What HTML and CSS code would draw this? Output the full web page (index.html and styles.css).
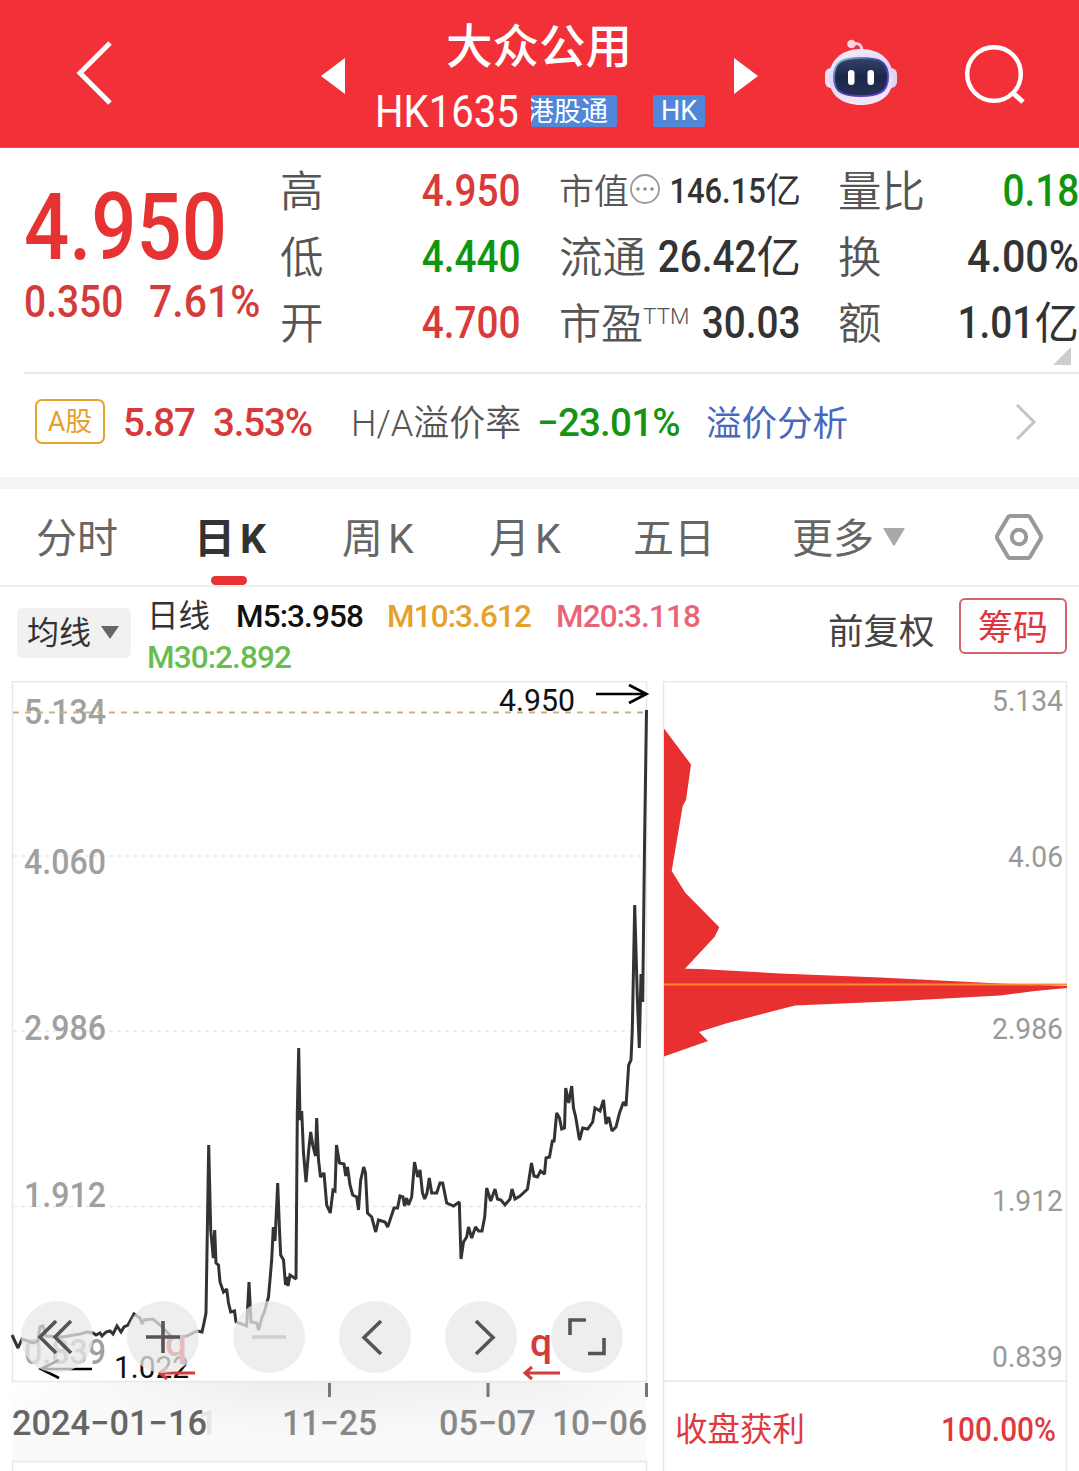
FILE: index.html
```html
<!DOCTYPE html>
<html lang="zh-CN">
<head>
<meta charset="utf-8">
<title>大众公用 HK1635</title>
<link rel="stylesheet" href="styles.css">
</head>
<body>
<header class="topbar">
  <svg class="back" width="44" height="70" viewBox="0 0 44 70"><path d="M38 5 8 35l30 30" fill="none" stroke="#fff" stroke-width="5"/></svg>
  <svg class="prev" width="24" height="36" viewBox="0 0 24 36"><path d="M0 18 24 0v36z" fill="#fff"/></svg>
  <div class="stock">
    <h1>大众公用</h1>
    <div class="code-row"><span class="code">HK1635</span><span class="tag tag-connect"><i>港股通</i></span><span class="tag tag-hk">HK</span></div>
  </div>
  <svg class="next" width="24" height="36" viewBox="0 0 24 36"><path d="M24 18 0 0v36z" fill="#fff"/></svg>
  <svg class="robot" width="74" height="68" viewBox="0 0 74 68">
    <defs>
      <linearGradient id="shell" x1="0" y1="0" x2=".3" y2="1"><stop offset="0" stop-color="#fbeef6"/><stop offset=".55" stop-color="#dcd6f6"/><stop offset="1" stop-color="#f4e6fa"/></linearGradient>
      <linearGradient id="rim" x1="0" y1="0" x2="1" y2="1"><stop offset="0" stop-color="#79c8dc"/><stop offset=".45" stop-color="#4a3fa0"/><stop offset="1" stop-color="#6a3fe0"/></linearGradient>
      <linearGradient id="visor" x1="0" y1="0" x2="0" y2="1"><stop offset="0" stop-color="#364266"/><stop offset=".5" stop-color="#1b2749"/><stop offset="1" stop-color="#253156"/></linearGradient>
    </defs>
    <path d="M28 5c7-2 10 1 10 8" fill="none" stroke="#fad0dc" stroke-width="3"/><circle cx="27.500" cy="5" r="4.300" fill="#fbd3de"/>
    <rect x="1" y="29" width="14" height="20" rx="6" fill="#f1e3f4"/><rect x="59" y="29" width="14" height="20" rx="6" fill="#e2d4f2"/>
    <path d="M37 10c20 0 32 12 32 29 0 18-14 27-32 27S5 57 5 39c0-17 12-29 32-29z" fill="url(#shell)"/>
    <path d="M37 19c18 0 27 3 27 19s-10 19-27 19-27-3-27-19 9-19 27-19z" fill="url(#visor)" stroke="url(#rim)" stroke-width="2"/>
    <rect x="24" y="31" width="6.500" height="15" rx="3.200" fill="#fff"/><rect x="43.500" y="31" width="6.500" height="15" rx="3.200" fill="#fff"/>
  </svg>
  <svg class="search" width="64" height="64" viewBox="0 0 64 64"><circle cx="31" cy="31" r="26.800" fill="none" stroke="#fff" stroke-width="4.400"/><path d="m50 50 10 9" stroke="#fff" stroke-width="5"/></svg>
</header>

<section class="quote">
  <div class="price-block">
    <div class="price">4.950</div>
    <div class="change"><span>0.350</span><span class="pct">7.61%</span></div>
  </div>
  <dl class="stats">
    <div><dt>高</dt><dd class="up"><span>4.950</span></dd></div>
    <div><dt>低</dt><dd class="down"><span>4.440</span></dd></div>
    <div><dt>开</dt><dd class="up"><span>4.700</span></dd></div>
  </dl>
  <dl class="stats">
    <div class="compact"><dt>市值<svg width="32" height="32" viewBox="0 0 32 32"><circle cx="16" cy="16" r="14" fill="none" stroke="#999" stroke-width="1.800"/><g fill="#888"><circle cx="9" cy="16" r="1.700"/><circle cx="16" cy="16" r="1.700"/><circle cx="23" cy="16" r="1.700"/></g></svg></dt><dd><span>146.15</span><b>亿</b></dd></div>
    <div><dt>流通</dt><dd><span>26.42</span><b>亿</b></dd></div>
    <div class="pe"><dt>市盈<sup>TTM</sup></dt><dd><span>30.03</span></dd></div>
  </dl>
  <dl class="stats">
    <div><dt>量比</dt><dd class="down"><span>0.18</span></dd></div>
    <div><dt>换</dt><dd><span class="pct">4.00%</span></dd></div>
    <div><dt>额</dt><dd><span>1.01</span><b>亿</b></dd></div>
  </dl>
  <svg class="expand" width="18" height="18" viewBox="0 0 18 18"><path d="M18 0v18H0z" fill="#ccc"/></svg>
</section>

<section class="premium">
  <span class="a-badge">A股</span>
  <span class="a-price">5.87</span>
  <span class="a-change">3.53%</span>
  <span class="ha-label">H/A溢价率</span>
  <span class="ha-value">−23.01%</span>
  <a class="ha-link">溢价分析</a>
  <svg class="more" width="24" height="38" viewBox="0 0 24 38"><path d="M3 2 20 19 3 36" fill="none" stroke="#c4c4c4" stroke-width="3"/></svg>
</section>

<nav class="tabs">
  <span class="tab t1">分时</span>
  <span class="tab t2 active">日<em>K</em></span>
  <span class="tab t3">周<em>K</em></span>
  <span class="tab t4">月<em>K</em></span>
  <span class="tab t5">五日</span>
  <span class="tab t6">更多<svg width="24" height="20" viewBox="0 0 24 20"><path d="M2 1h20q1 0 .500 1L13 18q-1 1.500-2 0L1.500 2Q1 1 2 1z" fill="#a9a9a9"/></svg></span>
  <svg class="settings" width="50" height="50" viewBox="0 0 50 50"><path d="M16.500 4h17q2 0 3 2l10 17q1 2 0 4l-10 17q-1 2-3 2h-17q-2 0-3-2l-10-17q-1-2 0-4l10-17q1-2 3-2z" fill="none" stroke="#999" stroke-width="4"/><circle cx="25" cy="25" r="7.200" fill="none" stroke="#999" stroke-width="4"/></svg>
</nav>

<section class="indicators">
  <div class="ma-select">均线<svg width="18" height="14" viewBox="0 0 18 14"><path d="M0 0h18L9 13z" fill="#666"/></svg></div>
  <div class="ma-values">
    <span class="cycle">日线</span><span class="m5">M5:3.958</span><span class="m10">M10:3.612</span><span class="m20">M20:3.118</span><br><span class="m30">M30:2.892</span>
  </div>
  <span class="adjust">前复权</span>
  <span class="chips-btn">筹码</span>
</section>

<main class="charts">
  <div class="kline">
    <svg width="660" height="790" viewBox="0 681 660 790">
      <defs>
        <linearGradient id="axis" x1="0" y1="0" x2="1" y2="0"><stop offset="0" stop-color="#fff"/><stop offset=".4" stop-color="#ededed"/><stop offset=".85" stop-color="#f2f2f2"/><stop offset="1" stop-color="#fafafa"/></linearGradient>
        <linearGradient id="fade" x1="0" y1="0" x2="0" y2="1"><stop offset="0" stop-color="#fafafa" stop-opacity="0"/><stop offset=".7" stop-color="#fafafa"/></linearGradient>
      </defs>
      <rect x="12" y="1382" width="635" height="79" fill="url(#axis)"/>
      <rect x="12" y="1382" width="635" height="79" fill="url(#fade)"/>
      <g fill="none" stroke="#e8e8e8" stroke-width="1.500">
        <rect x="12.500" y="681.500" width="634" height="700"/><path d="M12.500 1471v-9.500h634v9.500"/>
        <path d="M13 856H646M13 1031H646M13 1206.500H646" stroke-dasharray="4 4"/>
      </g>
      <g class="axis-y">
        <text x="24" y="723.500" textLength="82" lengthAdjust="spacingAndGlyphs">5.134</text>
        <text x="24" y="873.500" textLength="82" lengthAdjust="spacingAndGlyphs">4.060</text>
        <text x="24" y="1039.500" textLength="82" lengthAdjust="spacingAndGlyphs">2.986</text>
        <text x="24" y="1206.500" textLength="82" lengthAdjust="spacingAndGlyphs">1.912</text>
        <text x="24" y="1364" textLength="82" lengthAdjust="spacingAndGlyphs">0.839</text>
      </g>
      <path d="M13 712.500H646" stroke="#cbb083" stroke-width="2" stroke-dasharray="6 6"/>
      <path class="price-line" d="M12 1335 18 1348 22 1339 33 1343 38 1341 40 1327 43 1326 46 1336 63 1337 80 1334 87 1332 93 1333 96 1335 100 1333 102 1336 106 1332 110 1331 113 1334 117 1326 121 1332 124 1327 128 1325 134 1314 140 1318 142 1324 144 1320 153 1319 160 1325 173 1338 187 1336 197 1331 202 1332 204 1323 206 1313 208.700 1145 210.700 1230 213.300 1258 214.700 1230 216 1263 218.500 1265 220 1282 223.500 1292 226.700 1289 228.500 1303 230.700 1312 234.500 1311 236 1322 246.700 1326 249 1282 251 1322 256.700 1323 258.700 1330 261.700 1318 264 1313 268.500 1297 271.700 1260 273.300 1227 275 1241 277.700 1183 279.500 1230 280.700 1255 283.500 1260 285.500 1285 286.700 1277 288 1286 290 1275 296 1279 297.300 1113 298.700 1048 300 1120 301.700 1111 303.500 1153 306 1182 308.700 1150 310.700 1132 312.700 1145 315.500 1156 316.700 1118 318.500 1160 320.500 1177 324 1173 326.700 1205 330.300 1213 333 1190 335 1191 336.500 1145 339.500 1163 344 1164 345.700 1176 347.500 1167 350 1185 352.700 1195 356.700 1197 358.500 1210 360.700 1180 363.700 1167 365.500 1173 367.500 1213 371.700 1217 375.700 1232 378.500 1220 385 1222 387.700 1227 390.700 1218 394 1208 397.500 1208 400 1196 403 1197 404.500 1206 406.700 1198 408.500 1205 411.700 1197 414.500 1162 417.700 1177 420 1170 422.500 1193 424.700 1199 427 1193 429.300 1178 431.700 1193 436.700 1193 440 1183 442.700 1183 446.700 1203 453.500 1206 459.300 1202 461 1259 463.500 1242 466.700 1237 468.500 1227 471.700 1238 475.500 1227 478.500 1231 482 1231 484.700 1217 486.700 1188 490.700 1201 495 1189 497.500 1199 501 1200 505 1205 510 1199 512 1189 515 1199 520 1196 527.500 1189 531.500 1163 534 1176 537.500 1177 540.500 1171 544.500 1174 546 1158 549.500 1157 552.500 1140 554 1142 556.700 1113 559.500 1118 561.700 1129 564.500 1128 565.700 1088 568.700 1103 571.700 1086 573.500 1108 575.700 1117 579.500 1140 582.700 1128 587.700 1129 592.700 1122 595 1108 600 1111 603.500 1100 606 1124 608.700 1117 612 1131 616 1127 619.500 1113 623.500 1102 626 1106 628.700 1065 631 1060 632.300 1030 634.700 905 637.300 997 639.300 1048 641 974 642.700 1002 644.500 847 646.500 710"/>
      <g class="marker">
        <text x="499" y="711" textLength="76" lengthAdjust="spacingAndGlyphs">4.950</text>
        <path d="M596 694H646M629 685l17.500 9-17.500 9"/>
        <text x="114" y="1378" textLength="75" lengthAdjust="spacingAndGlyphs">1.022</text>
        <path d="M92 1369H42M59 1360l-18 9 18 9"/>
      </g>
      <g class="rights">
        <text x="165" y="1356">q</text><path d="M195 1373h-34M167 1367l-7 6 7 6"/>
        <text x="530" y="1356">q</text><path d="M560 1373h-34M532 1367l-7 6 7 6"/>
      </g>
      <path d="M329.500 1383v14M488 1383v14M646.500 1383v14" stroke="#777" stroke-width="3"/>
      <g class="axis-x">
        <text x="198" y="1435" class="ghost">1</text>
        <text x="12" y="1435" textLength="195" lengthAdjust="spacingAndGlyphs" class="start">2024−01−16</text>
        <text x="282" y="1435" textLength="95" lengthAdjust="spacingAndGlyphs">11−25</text>
        <text x="439" y="1435" textLength="97" lengthAdjust="spacingAndGlyphs">05−07</text>
        <text x="552" y="1435" textLength="95" lengthAdjust="spacingAndGlyphs">10−06</text>
      </g>
    </svg>
    <div class="controls">
      <button><svg viewBox="0 0 72 72"><path d="M35 20 19 36l16 16M50 20 34 36l16 16"/></svg></button>
      <button><svg viewBox="0 0 72 72"><path d="M36 20v32M19 36h34"/></svg></button>
      <button class="off"><svg viewBox="0 0 72 72"><path d="M19 36h34"/></svg></button>
      <button><svg viewBox="0 0 72 72"><path d="M42 20 25 36.500 42 53"/></svg></button>
      <button><svg viewBox="0 0 72 72"><path d="M31 20 48 36.500 31 53"/></svg></button>
      <button><svg viewBox="0 0 72 72"><path d="M19 34V19h16M37 52.500h16V37"/></svg></button>
    </div>
  </div>
  <div class="chips">
    <svg width="419" height="790" viewBox="660 681 419 790">
      <path d="M663.500 1471V681.500H1066.500V1471M663.500 1381H1066.500" fill="none" stroke="#e8e8e8" stroke-width="1.500"/>
      <path d="M664 728.500 691 764.500 686 800 682.700 806 671.700 871 685.300 892.700 719.300 927.300 714.700 936.700 685 968.700 701 969 780 973.500 880 977.500 1000 983.500 1067 986V988L1035 991 1000 995.500 900 1001 795 1005.500 726.700 1023.300 699 1032 708 1041 664 1056.500z" fill="#e83030"/>
      <path d="M664 984.500H1067" stroke="#ff8a2a" stroke-width="2"/>
      <g class="axis-chip">
        <text x="992" y="711" textLength="71" lengthAdjust="spacingAndGlyphs">5.134</text>
        <text x="1008" y="867" textLength="55" lengthAdjust="spacingAndGlyphs">4.06</text>
        <text x="992" y="1039" textLength="71" lengthAdjust="spacingAndGlyphs">2.986</text>
        <text x="992" y="1211" textLength="71" lengthAdjust="spacingAndGlyphs">1.912</text>
        <text x="992" y="1367" textLength="71" lengthAdjust="spacingAndGlyphs">0.839</text>
      </g>
      <g class="profit">
        <text x="675" y="1441" class="cjk">收盘获利</text>
        <text x="941" y="1441" textLength="115" lengthAdjust="spacingAndGlyphs">100.00%</text>
      </g>
    </svg>
  </div>
</main>
</body>
</html>
```

FILE: styles.css
```css
* { box-sizing: border-box; }
body {
  margin: 0;
  width: 1079px;
  height: 1471px;
  overflow: hidden;
  background: #fff;
  color: #333;
  font-family: Roboto, "Noto Sans CJK SC", sans-serif;
}
svg { display: block; flex: none; }
i, em, b { font-style: normal; font-weight: inherit; }

/* top bar */
.topbar { display: flex; align-items: flex-start; height: 148px; background: #f23037; color: #fff; border-bottom: 1px solid #e0555a; }
.back { margin: 38px 0 0 72px; }
.prev { margin: 58px 0 0 205px; }
.stock { width: 389px; padding-left: 30px; white-space: nowrap; }
.stock h1 { margin: 10px 0 0 71px; font: 500 46.5px/66px "Noto Sans CJK SC", sans-serif; }
.code-row { display: flex; align-items: center; height: 70px; }
.code { width: 156px; font-size: 45px; transform: scaleX(.89); transform-origin: 0 50%; }
.tag { height: 32px; background: #5187d8; font: 27px/32px Roboto, "Noto Sans CJK SC", sans-serif; border-radius: 2px; overflow: hidden; }
.tag-connect { width: 86px; }
.tag-connect i { display: block; margin: 1px 0 0 -4px; }
.tag-hk { width: 52px; margin-left: 36px; text-align: center; }
.next { margin: 58px 0 0 0; }
.robot { margin: 39px 0 0 66px; }
.search { margin: 43px 0 0 65px; }

/* quote */
.quote { position: relative; display: grid; grid-template-columns: 256px 241px 242px 241px; height: 226px; margin-left: 24px; padding-top: 9px; border-bottom: 2px solid #e9e9e9; }
.quote .stats + .stats { margin-left: 38px; width: 242px; }
.quote .stats:nth-of-type(3) { margin-left: 75px; width: 241px; }
.price { margin-top: 25px; font-size: 92px; line-height: 92px; font-weight: 500; color: #e63232; transform: scaleX(.865); transform-origin: 0 50%; }
.change { display: flex; margin-top: 3px; font-size: 44.5px; line-height: 50px; color: #d43c3c; font-weight: 500; white-space: nowrap; }
.change span { width: 125px; transform: scaleX(.875); transform-origin: 0 50%; }
.change .pct { transform: scaleX(.92); }
.stats { margin: 0; }
.stats > div { display: flex; align-items: center; justify-content: space-between; height: 66px; white-space: nowrap; }
.stats dt { display: flex; align-items: center; margin-top: -2px; font: 350 43.5px/66px "Noto Sans CJK SC", sans-serif; color: #555; }
.stats dd { display: flex; align-items: center; margin: 2px 0 0 -30px; font-size: 44.5px; font-weight: 500; }
.stats dd span { transform: scaleX(.87); transform-origin: 100% 50%; }
.stats dd .pct { transform: scaleX(.925); }
.stats b { margin-top: -6px; font-family: "Noto Sans CJK SC", sans-serif; font-weight: 400; line-height: 66px; }
.stats .compact dt { font-size: 35px; }
.stats .compact dd { font-size: 35.5px; }
.pe dt { font-size: 42px; }
.pe sup { align-self: flex-start; font: 300 22.5px/56px Roboto, sans-serif; }
.up { color: #d93a3a; }
.down { color: #0f960f; }
.expand { position: absolute; right: 8px; bottom: 7px; }

/* A/H premium */
.premium { display: flex; align-items: center; height: 103px; padding: 0 41px 8px 35px; font-size: 38.5px; white-space: nowrap; }
.a-badge { width: 70px; height: 45px; border: 2px solid #e5a32c; border-radius: 7px; color: #e5a02b; font-size: 27px; line-height: 43px; text-align: center; }
.a-price, .a-change { color: #d63a3a; font-weight: 500; letter-spacing: -.03em; }
.a-price { width: 90px; margin: 2px 0 0 18px; }
.a-change { width: 138px; margin-top: 2px; }
.ha-label { width: 186px; font-size: 36px; font-weight: 350; line-height: 50px; margin-top: 5px; color: #555; }
.ha-value { width: 169px; margin-top: 2px; color: #149414; font-weight: 500; letter-spacing: -.02em; }
.ha-link { margin-top: 5px; color: #4868c0; font-size: 35.5px; line-height: 50px; }
.more { margin-left: auto; }

/* tabs */
.tabs { display: flex; height: 110px; align-items: center; border-top: 12px solid #f4f4f4; border-bottom: 2px solid #efefef; padding-left: 36px; font: 400 41px/57px "Noto Sans CJK SC", sans-serif; color: #666; }
.tab { position: relative; height: 60px; }
.tab em { margin-left: 5px; font-family: Roboto, sans-serif; }
.t1 { width: 158px; }
.t2 { width: 148px; }
.t3 { width: 147px; }
.t4 { width: 144px; }
.t5 { width: 159px; }
.t6 { display: flex; gap: 8px; width: 202px; }
.t6 svg { margin-top: 20px; }
.active { color: #333; font-weight: 700; }
.active::after { content: ""; position: absolute; left: 17px; top: 69px; width: 36px; height: 9px; border-radius: 5px; background: #e63232; }

/* moving averages */
.indicators { display: flex; height: 94px; padding-left: 17px; white-space: nowrap; }
.ma-select { display: flex; align-items: center; gap: 10px; width: 114px; height: 50px; margin-top: 21px; padding-left: 10px; border-radius: 6px; background: #f1f1f1; font-size: 32px; line-height: 50px; }
.ma-values { width: 697px; padding: 9px 0 0 16px; font-size: 31.5px; line-height: 41px; letter-spacing: -.9px; }
.ma-values span { display: inline-block; font-weight: 500; }
.ma-values .cycle { width: 89px; letter-spacing: 0; font-weight: 400; }
.ma-values .m5 { width: 151px; color: #111; }
.ma-values .m10 { width: 169px; color: #e5a12c; }
.m20 { color: #ea6478; }
.m30 { color: #69bd50; }
.adjust { width: 131px; margin-top: 18px; font-size: 35.5px; line-height: 54px; color: #444; }
.chips-btn { width: 108px; height: 56px; margin-top: 11px; border: 2px solid #d8626c; border-radius: 6px; color: #e03540; font-size: 35px; line-height: 58px; text-align: center; }

/* charts */
.charts { display: flex; height: 790px; }
.kline { position: relative; width: 660px; }
.price-line { fill: none; stroke: #333; stroke-width: 3; stroke-linejoin: miter; stroke-miterlimit: 2; }
.axis-y text { font: 500 35px Roboto, sans-serif; fill: #a0a0a0; }
.axis-x text { font: 500 35px Roboto, sans-serif; fill: #888; }
.axis-x .start { fill: #666; }
.axis-x .ghost { fill: #e6e6e6; }
.axis-chip text { font: 400 29px Roboto, sans-serif; fill: #999; }
.marker text { font: 400 31px Roboto, sans-serif; fill: #111; }
.marker path { fill: none; stroke: #000; stroke-width: 2.6; }
.rights text { font: 500 39px Roboto, sans-serif; fill: #d23c3c; }
.rights path { fill: none; stroke: #d23c3c; stroke-width: 3; }
.profit text { font: 500 34px Roboto, sans-serif; fill: #df3a3f; }
.profit .cjk { font: 400 32.500px "Noto Sans CJK SC", sans-serif; }
.controls { position: absolute; left: 21px; top: 620px; display: flex; gap: 34px; }
.controls button { width: 72px; height: 72px; padding: 0; border: 0; border-radius: 50%; background: rgba(232, 232, 232, .75); }
.controls path { fill: none; stroke: #555; stroke-width: 3.6; }
.controls .off path { stroke: #cfcfcf; }
```
